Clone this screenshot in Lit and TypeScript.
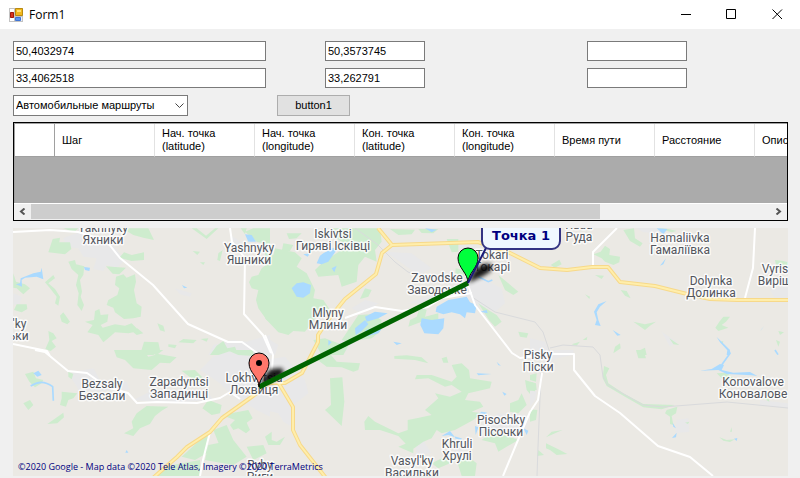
import { LitElement, html, svg, css } from "lit";
import { customElement, state } from "lit/decorators.js";

interface Patch {
  x: number;
  y: number;
  woods: string;
  water: string;
  towns: string;
  streams: string;
}

// Land cover, stored per survey tile at three units to the map pixel.
const PATCHES: Patch[] = [
  {
    x: 0, y: 225,
    towns: "M190 40L240 20 330 50 375 105 350 130 320 120 310 138 280 132 290 100 250 95 235 70 200 65ZM640 360L700 345 740 350 810 330V390H625ZM690 30L740 60 735 90 700 80ZM525 190L575 205 570 215 540 208ZM40 205L65 215 60 235 40 240Z",
    woods: "M158 42L180 38 178 52 210 52 214 72 195 88 145 82ZM190 10H235L222 22ZM360 10H445L462 45 430 38 400 30 380 18ZM372 82L395 90 432 82V105L395 108 358 98ZM205 110L225 105 228 118 253 124 250 150 240 165 246 200 242 215 252 240 245 258 232 240 236 205 228 180 235 150 215 132ZM318 124L345 126 378 128 358 148 338 146ZM348 155L370 148 380 158 405 148 408 170 402 195 410 235 425 245 422 275 400 280 372 282 345 262 340 248 320 240 325 225 352 210 358 190 345 180ZM285 258L298 252 302 270 325 268 322 290 302 300 308 308 345 298 375 302 395 295 418 318 385 325 345 322 330 335 310 352 295 330 262 322 278 300 255 290 282 285ZM135 172L160 150 165 160 145 175 165 192 180 215 175 242 165 235 170 215 150 190ZM40 145L48 170 75 178 90 190 70 208 50 190 40 188ZM50 238L80 238 82 252 65 262 42 255ZM180 272L190 262 210 290 202 298 185 290ZM145 318L160 325 170 340 155 348 168 365 152 378 136 372 148 345ZM398 320L412 310 430 325 410 330ZM472 295L490 302 495 320 480 316ZM432 350L475 352 480 375 460 390H420ZM505 358L530 360 525 370 505 365ZM535 352L550 342 590 345 580 355ZM602 342L625 340 620 350ZM650 362L670 348 682 370 705 365 715 390H630ZM578 78L600 80 592 90ZM600 112H615L610 120ZM655 85L668 75 660 108 652 105ZM575 10H590L618 32 645 10H655L620 42ZM735 20L760 10H810V68L790 55 770 50ZM810 110L785 130 775 150 755 155 747 172 755 190 775 195 768 225 775 250 800 285 810 290ZM722 10H740L735 28Z",
    water: "M100 145L122 140 125 128 130 163 110 155 75 158 65 165 66 185 48 178 60 175 62 160ZM252 126L270 128 268 138 255 135ZM735 28L755 30 768 50 745 50ZM546 180L562 188 552 190Z",
    streams: "",
  },
  {
    x: 265, y: 225,
    towns: "M590 180L650 160 710 190 720 235 690 260 630 235 590 210 540 220 500 235 430 235 520 200ZM195 370L240 340 280 345 240 380ZM260 250L300 225 340 235 320 250 280 260ZM360 80L440 85 500 130 460 150 390 100ZM0 335L40 360 30 390H0ZM580 50H640L620 75 580 70Z",
    woods: "M0 80L25 90 30 70 90 82 110 100 95 125 125 145 150 195 145 220 175 225 195 255 150 280 120 320 85 318 70 330 40 322 0 280ZM200 10H345L350 50 330 75 335 110 300 95 280 120 275 170 230 185 220 150 160 155 150 135 175 110 230 75 250 65 215 40ZM65 25H110L95 40 72 42ZM55 55L85 60 75 78 50 80ZM375 12L450 14 440 28 400 30ZM460 12H520L505 25 470 24ZM545 42H580V80L560 82ZM572 130L600 135 595 160 570 155ZM300 190L320 195 310 215 285 222ZM145 345L180 340 220 355 250 362 235 390H170ZM280 270L320 268 350 285 345 320 320 340 250 350 230 345ZM465 245L485 255 480 275 520 265 520 285 470 290 430 305 435 285 455 275ZM640 235L670 255 695 270 710 290 690 305 672 285ZM700 150L730 175 760 200 745 210 720 195ZM780 60L800 65 805 75 785 72ZM760 320L790 325 785 338 765 335ZM110 180L140 185 138 215 115 215Z",
    water: "M80 190L95 175 115 172 138 180 135 205 115 218 95 215ZM175 85L205 68 215 75 190 110 170 118 155 115 165 92ZM115 88L135 85 128 95ZM200 130L215 122 208 142ZM270 310L300 285 310 298 290 318 272 330ZM300 275L330 260 368 265 340 280 305 290ZM470 280L500 285 538 280 535 310 520 328 478 325 466 300ZM302 315L330 308 350 312 340 325 300 335ZM515 245L550 225 605 215 615 232 635 240 630 265 605 262 600 280 585 268 560 262 535 268 512 260ZM190 345L200 352 190 362ZM645 260L665 255 668 265ZM385 350L410 355 395 360ZM480 10L515 14 500 22Z",
    streams: "M640 155L670 170 682 165",
  },
  {
    x: 530, y: 225,
    towns: "M320 10H400L390 25 340 22ZM720 195L774 180V220H735ZM0 340L45 350 60 390H0ZM470 185L540 200 530 215 480 215ZM395 320L440 350 420 365Z",
    woods: "M280 15L312 10 315 40 338 55 330 65 300 48ZM190 88L212 80 225 62 240 72 238 90 270 95 268 112 250 120 225 110 215 100ZM62 120L88 104 95 118 75 128ZM195 150L222 152 215 162ZM272 195L290 198 302 220 285 212ZM310 290L345 298 378 290 360 302 345 315ZM568 290L580 275 600 275 588 290 575 300 595 308 565 318 556 308ZM418 340L448 360 430 358ZM255 365L270 355 272 370 250 385ZM320 380L345 368 350 390H325ZM158 345L172 335 170 345ZM125 358L150 350 140 362ZM735 105L760 108 774 112V120H738ZM165 208L180 215 178 222ZM745 318L762 322 750 330ZM570 350L580 348 578 358ZM738 345L750 350 745 365ZM385 10L415 12 440 18 425 22Z",
    water: "M230 228L205 238 192 260 200 285 195 300 212 303 205 285 200 262 210 245ZM248 315L272 330 262 332ZM690 320L702 303 695 312ZM380 10L412 12 400 28ZM408 100L390 122 400 118ZM560 336L575 350 600 375 598 390H590L592 376 570 352Z",
    streams: "",
  },
  {
    x: 0, y: 350,
    towns: "M205 70L280 55 300 90 380 95 390 120 240 125ZM640 20L700 0H810V200L770 180 700 140 660 100 600 60ZM400 150L460 120 620 120 640 150 500 160Z",
    woods: "M342 0H430L445 20 475 12 530 22 510 40 480 38 455 60 400 55 375 30 350 22ZM420 0H490L470 15ZM545 62L585 60 610 85 600 98 570 82ZM205 65L220 72 215 88 205 80ZM75 72L100 65 108 85 130 90 125 100 105 112 88 95ZM70 160L90 150 100 165 85 180ZM185 125L232 130 220 145 205 150 198 170 180 165 185 145ZM190 188L192 202 172 220 142 222ZM410 190L440 168 505 170 485 182 465 198 450 222 420 235 400 258 372 250 400 235 395 215ZM625 150L665 165 660 190 635 195 607 175ZM665 195L745 180 758 205 740 218 750 240 738 250 715 235 700 240 690 225 705 210ZM600 270L628 250 620 310 585 330 545 320ZM640 240L680 225 700 270 660 290ZM625 285L700 270 740 320 700 345 615 330ZM740 290L790 285 800 310 760 330ZM490 350L600 330V378H475ZM680 0H760V18L715 15Z",
    water: "M100 70L115 62 125 75 112 80ZM380 300L385 308H376Z",
    streams: "M92 108Q125 85 158 110L160 152",
  },
  {
    x: 265, y: 350,
    towns: "M0 30L60 20 120 90 130 130 80 170 80 230 55 215 40 190 0 180ZM450 265L470 235 480 280 500 310 455 315ZM560 300L570 270 595 265V310ZM700 190L790 195 780 245 640 240Z",
    woods: "M165 12L190 5 215 35 285 40 280 60 265 65 230 52 185 50 155 28ZM195 85L232 82 238 155 230 228 180 180 198 165ZM388 18L425 16 470 22 490 40 450 30 388 26ZM530 25L545 20 550 38 535 38ZM560 45L590 40 612 60 615 85 680 95 675 115 610 130 600 150 645 155 655 170 620 185 650 190 625 210 570 240 530 250 515 240 500 265 475 275 440 300 400 258 345 240 300 240 298 215 310 198 330 215 400 250 428 240V210L455 205 500 195 480 180 520 145 510 130 555 140 590 125 560 105 540 110 490 85 450 88 455 75 500 75 560 95 575 80ZM425 280L445 272V310L400 290ZM780 90L810 100V150L785 120ZM770 130L785 165 760 190 735 185 735 160 760 150ZM650 270L680 245 735 260 760 270 700 305 690 280ZM0 260L20 245 20 270 35 275 60 260 45 285 10 285ZM575 330L610 320 635 340 630 378H590ZM500 340L540 320 555 340 520 355Z",
    water: "M635 70L680 72 640 76ZM695 35L708 48 700 45ZM712 125L725 132 718 137ZM530 258L555 243 570 262 550 255ZM775 235L790 242 785 255ZM630 228L640 232 632 255Z",
    streams: "M570 262L590 268M635 200L650 188 665 190",
  },
  {
    x: 530, y: 350,
    towns: "M40 0H130V15L80 25 40 60ZM440 210L475 205 478 245 435 250ZM0 120L20 125 15 150 0 170ZM690 150L774 160V175L690 165Z",
    woods: "M318 0H340L348 25 325 25ZM222 48L238 55 228 75 235 100 280 130 340 162 435 165 395 178 340 172 285 140 230 108 218 85ZM410 180L442 170 438 190 425 198 430 225 420 222 420 200 405 190ZM48 262L65 245 98 240 75 250ZM48 280L85 298 112 312 80 315 60 300 48 295ZM568 262L590 270 615 268 600 276 580 272ZM600 245L605 232 606 245ZM560 70L590 68 610 85 600 95 575 85ZM0 75L20 70 18 95 0 90ZM0 178L22 180 18 210 0 215ZM25 300L42 315 22 318ZM700 145L715 140 718 155ZM0 95L18 100 20 120 0 122ZM465 218L478 215 474 222Z",
    water: "M510 62L545 57 570 42 582 45 575 60 610 68 660 66 682 78 665 76 590 72 565 60ZM428 218L438 235 430 230ZM440 248L438 262 426 264ZM612 266L622 264 620 273Z",
    streams: "M575 45L600 10 596 0M735 0L744 14",
  },
];

const ROADS = [
  "M13 232L50 230 78 232 98 238 108 243 120 258 153 285 188 324 228 342 242 342 260 355",
  "M230 228L232 242 245 258 244 314 263 335 271 353",
  "M265 335L273 355 272 370",
  "M13 344L47 351 50 356M35 350L45 352 68 371 87 373 97 380 110 388 128 393 137 403 157 402 197 403 220 398 230 392 240 399",
  "M210 432L203 460 200 476",
  "M345 318L375 307 402 311 428 307 442 298 472 293M468 285L475 305 512 353 520 358 552 354 574 354 574 370 595 396 620 413 658 446 690 457 713 476",
  "M542 373L538 400 530 412 518 440 503 476",
  "M617 228L593 252 593 266",
  "M755 228L753 268 745 298",
];

const HIGHWAYS =
  "M378 228L392 245 478 242 510 253 540 268 567 270 592 267 608 267 620 282 655 286 687 294 710 299 737 300 790 300" +
  "M392 245L382 253 376 274 345 299 328 320 318 335 318 342 302 373 285 383 270 383 253 396 222 418 210 432 187 447 177 457 153 478" +
  "M278 382L293 407 293 430 300 445 326 478";

const RAILWAYS =
  "M355 228L378 245 395 262 408 272 435 283M472 297L495 312 535 322 543 332 550 353M550 348L563 345 593 347 600 355 603 377 608 385 643 405 663 407 727 402 788 408M541 373L538 447 537 476";

// Place labels: centre, first baseline, Latin name, Ukrainian name.
const PLACES: [number, number, string, string][] = [
  [103, 232, "Yakhnyky", "Яхники"],
  [249, 252, "Yashnyky", "Яшники"],
  [333, 238, "Iskivtsi", "Гиряві Ісківці"],
  [579, 229, "Ruda", "Руда"],
  [680, 242, "Hamaliivka", "Гамаліївка"],
  [492, 259, "Tokari", "Токарі"],
  [437, 282, "Zavodske", "Заводське"],
  [711, 285, "Dolynka", "Долинка"],
  [783, 273, "Vyrishal", "Вирішал."],
  [328, 317, "Mlyny", "Млини"],
  [8, 328, "Luts'ky", "Луцьки"],
  [538, 359, "Pisky", "Піски"],
  [102, 388, "Bezsaly", "Безсали"],
  [179, 386, "Zapadyntsi", "Западинці"],
  [254, 382, "Lokhvytsia", "Лохвиця"],
  [753, 386, "Konovalove", "Коновалове"],
  [501, 424, "Pisochky", "Пісочки"],
  [457, 448, "Khruli", "Хрулі"],
  [412, 465, "Vasyl'ky", "Васильки"],
  [260, 469, "Ryby", "Риги"],
];

@customElement("route-map")
class RouteMap extends LitElement {
  static styles = css`
    :host { display: block; }
    .map { display: block; width: 100%; height: auto; background: #ebe9e4; }
    .town { fill: #e8e8e9; }
    .wood { fill: #ceecce; }
    .water { fill: #aadaff; }
    .stream { fill: none; stroke: #aadaff; stroke-width: 5; }
    .rail { fill: none; stroke: #d9dadc; stroke-width: 1; }
    .road { fill: none; stroke: #fff; stroke-width: 2; stroke-linejoin: round; }
    .casing { fill: none; stroke: #f7d98a; stroke-width: 4; stroke-linejoin: round; }
    .highway { fill: none; stroke: #ffeeab; stroke-width: 2; stroke-linejoin: round; }
    .place {
      font: 12px Roboto, sans-serif; fill: #53565d; text-anchor: middle;
      stroke: #fff; stroke-width: 3; stroke-linejoin: round; stroke-opacity: 0.8; paint-order: stroke;
    }
    .route { stroke: #006400; stroke-width: 5; }
    .shadow { fill: #000; filter: blur(2px); opacity: 0.9; }
    .leader { stroke: #1c1c78; stroke-width: 2; }
    .bubble { fill: #f0f8ff; stroke: #343483; stroke-width: 2; }
    .caption { font: bold 13px "DejaVu Sans", sans-serif; fill: #000080; text-anchor: middle; }
    .copyright { font: 9px "Open Sans", sans-serif; fill: #000080; }
    .pin { stroke: #000; stroke-width: 1; }
    .green { fill: #00ff3c; }
    .red { fill: #ff776b; }
  `;

  render() {
    return html`
      <svg class="map" viewBox="13 228 775 248" role="img" aria-label="Карта маршрута">
        ${PATCHES.map((p) => svg`
          <g transform="translate(${p.x} ${p.y}) scale(0.33333)">
            <path class="town" d=${p.towns} />
            <path class="wood" d=${p.woods} />
            <path class="water" d=${p.water} />
            <path class="stream" d=${p.streams} />
          </g>`)}
        <path class="rail" d=${RAILWAYS} />
        ${ROADS.map((d) => svg`<path class="road" d=${d} />`)}
        <path class="casing" d=${HIGHWAYS} />
        <path class="highway" d=${HIGHWAYS} />
        ${PLACES.map(([x, y, latin, local]) => svg`
          <text class="place" x=${x} y=${y}>${latin}</text>
          <text class="place" x=${x} y=${y + 12}>${local}</text>`)}
        <path class="shadow" d="M468 283L474 271 482 264 492 264 491 271 483 276Z" />
        <path class="shadow" d="M260 386L264 376 271 369 282 368 284 374 274 381Z" />
        <line class="route" x1="468" y1="283" x2="259" y2="387" />
        <path class="pin green" d="M468 283C468 273 458 268 458 258A10 10 0 0 1 478 258C478 268 468 273 468 283Z" />
        <path class="pin red" d="M259 387C259 377 249 373 249 363A10 10 0 0 1 269 363C269 373 259 377 259 387Z" />
        <circle cx="259" cy="363" r="3" />
        <line class="leader" x1="468" y1="283" x2="487" y2="246" />
        <rect class="bubble" x="482" y="220" width="78" height="29" rx="8" />
        <text class="caption" x="521" y="240">Точка 1</text>
        <text class="copyright" x="18" y="470">©2020 Google - Map data ©2020 Tele Atlas, Imagery ©2020 TerraMetrics</text>
      </svg>`;
  }
}

@customElement("app-root")
class AppRoot extends LitElement {
  static styles = css`
    :host {
      display: block; min-height: 100vh; background: #f0f0f0; color: #000;
      font: 11px/13px "Liberation Sans", sans-serif;
    }
    * { box-sizing: border-box; }
    .titlebar { display: flex; align-items: center; height: 29px; padding-left: 9px; background: #fff; }
    .app-icon { width: 14px; height: 14px; }
    .title { flex: 1; margin: 0; padding: 0 6px; font: 12px/16px "Open Sans", sans-serif; }
    .winbtn {
      display: flex; align-items: center; justify-content: center;
      width: 46px; height: 28px; padding: 0; border: 0; background: none;
    }
    .winbtn svg { width: 11px; height: 11px; }
    .body { padding: 12px 12px 2px 13px; }
    .fields { display: grid; grid-template-columns: 264fr 310fr 201fr; margin-bottom: 6px; }
    .col { display: flex; flex-direction: column; align-items: flex-start; gap: 7px; }
    .inset { margin-left: 48px; }
    .field {
      width: 100px; height: 20px; padding: 0 2px; border: 1px solid #7a7a7a; border-radius: 0;
      background: #fff; color: #000; font: inherit;
    }
    .wide { width: calc(100% - 11px); }
    .combo { position: relative; width: 175px; }
    .select {
      display: block; appearance: none; width: 100%; height: 21px; padding: 0 18px 0 2px;
      border: 1px solid #7a7a7a; border-radius: 0; background: #fff; color: #000; font: inherit;
    }
    .chevron { position: absolute; right: 4px; top: 8px; width: 9px; height: 6px; pointer-events: none; }
    .button {
      width: 73px; height: 21px; padding: 0; border: 1px solid #adadad; background: #e1e1e1;
      color: #000; font: inherit;
    }
    .grid { border: 1px solid #000; background: #ababab; margin-bottom: 7px; }
    .viewport { height: 80px; overflow: hidden; border-top: 1px solid #a0a0a0; border-left: 1px solid #a0a0a0; }
    .table { width: 840px; table-layout: fixed; border-collapse: separate; border-spacing: 0; }
    .head {
      width: 100px; height: 33px; padding: 0 7px; background: #fff; text-align: left; font-weight: normal;
      border-right: 1px solid #e2e2e2; border-bottom: 1px solid #a0a0a0; white-space: pre-line;
    }
    .corner { width: 40px; border-right-color: #a0a0a0; }
    .scrollbar {
      display: flex; height: 17px; background: #f0f0f0;
      border-top: 1px solid #fff; border-bottom: 1px solid #f0f0f0;
    }
    .arrow {
      display: flex; align-items: center; justify-content: center;
      width: 17px; padding: 0; border: 0; background: none;
    }
    .arrow svg { width: 7px; height: 7px; }
    .track { flex: 1; }
    .thumb { width: 77%; height: 100%; background: #cdcdcd; }
  `;

  @state() private columns = [
    "Шаг",
    "Нач. точка\n(latitude)",
    "Нач. точка\n(longitude)",
    "Кон. точка\n(latitude)",
    "Кон. точка\n(longitude)",
    "Время пути",
    "Расстояние",
    "Описание",
  ];

  private titlebar() {
    return html`
      <header class="titlebar">
        <svg class="app-icon" viewBox="0 0 14 14" aria-hidden="true">
          <path d="M0 0H14V14H0Z" fill="#c3c3c3" />
          <path d="M1 1H5V4H1ZM1 10H5V13H1Z" fill="#fff" />
          <path d="M6 9H13V13H6Z" fill="#e8eefc" />
          <path d="M6.5 .5H13.5V7.5H6.5Z" fill="#f1b71c" stroke="#b98a10" />
          <path d="M8 2H12V4H8Z" fill="#ffe074" />
          <path d="M1.500 4.500H4.500V9.500H1.500Z" fill="#d8341c" stroke="#a01a0c" />
          <path d="M6.500 9.500H11.500V12.500H6.500Z" fill="#5b94ee" stroke="#3f74d4" />
        </svg>
        <h1 class="title">Form1</h1>
        <button class="winbtn" aria-label="Свернуть">
          <svg viewBox="0 0 11 11"><path d="M1 5H11V6H1Z" /></svg>
        </button>
        <button class="winbtn" aria-label="Развернуть">
          <svg viewBox="0 0 11 11"><path d="M.5 .5H9.5V9.5H.5Z" fill="none" stroke="#000" /></svg>
        </button>
        <button class="winbtn" aria-label="Закрыть">
          <svg viewBox="0 0 11 11"><path d="M.5 .5L10 10M10 .5L.5 10" fill="none" stroke="#000" /></svg>
        </button>
      </header>`;
  }

  private fields() {
    return html`
      <form class="fields" @submit=${(e: Event) => e.preventDefault()}>
        <div class="col">
          <input class="field wide" aria-label="Широта начала" .value=${"50,4032974"} />
          <input class="field wide" aria-label="Долгота начала" .value=${"33,4062518"} />
          <div class="combo">
            <select class="select" aria-label="Тип маршрута">
              <option>Автомобильные маршруты</option>
            </select>
            <svg class="chevron" viewBox="0 0 9 6" aria-hidden="true">
              <path d="M.5 .5L4.5 4.5 8.5 .5" fill="none" stroke="#444" />
            </svg>
          </div>
        </div>
        <div class="col">
          <input class="field inset" aria-label="Широта конца" .value=${"50,3573745"} />
          <input class="field inset" aria-label="Долгота конца" .value=${"33,262791"} />
          <button class="button" type="button">button1</button>
        </div>
        <div class="col">
          <input class="field" aria-label="Время пути" />
          <input class="field" aria-label="Расстояние" />
        </div>
      </form>`;
  }

  private dataGrid() {
    return html`
      <section class="grid">
        <div class="viewport">
          <table class="table">
            <thead>
              <tr>
                <th class="head corner"></th>
                ${this.columns.map((c) => html`<th class="head" scope="col">${c}</th>`)}
              </tr>
            </thead>
          </table>
        </div>
        <div class="scrollbar">
          <button class="arrow" aria-label="Влево">
            <svg viewBox="0 0 7 7"><path d="M5.5 .5L2 3.5 5.5 6.5" fill="none" stroke="#555" stroke-width="2" /></svg>
          </button>
          <div class="track"><div class="thumb"></div></div>
          <button class="arrow" aria-label="Вправо">
            <svg viewBox="0 0 7 7"><path d="M1.5 .5L5 3.5 1.5 6.5" fill="none" stroke="#555" stroke-width="2" /></svg>
          </button>
        </div>
      </section>`;
  }

  render() {
    return html`
      ${this.titlebar()}
      <main class="body">
        ${this.fields()}
        ${this.dataGrid()}
        <route-map></route-map>
      </main>`;
  }
}
